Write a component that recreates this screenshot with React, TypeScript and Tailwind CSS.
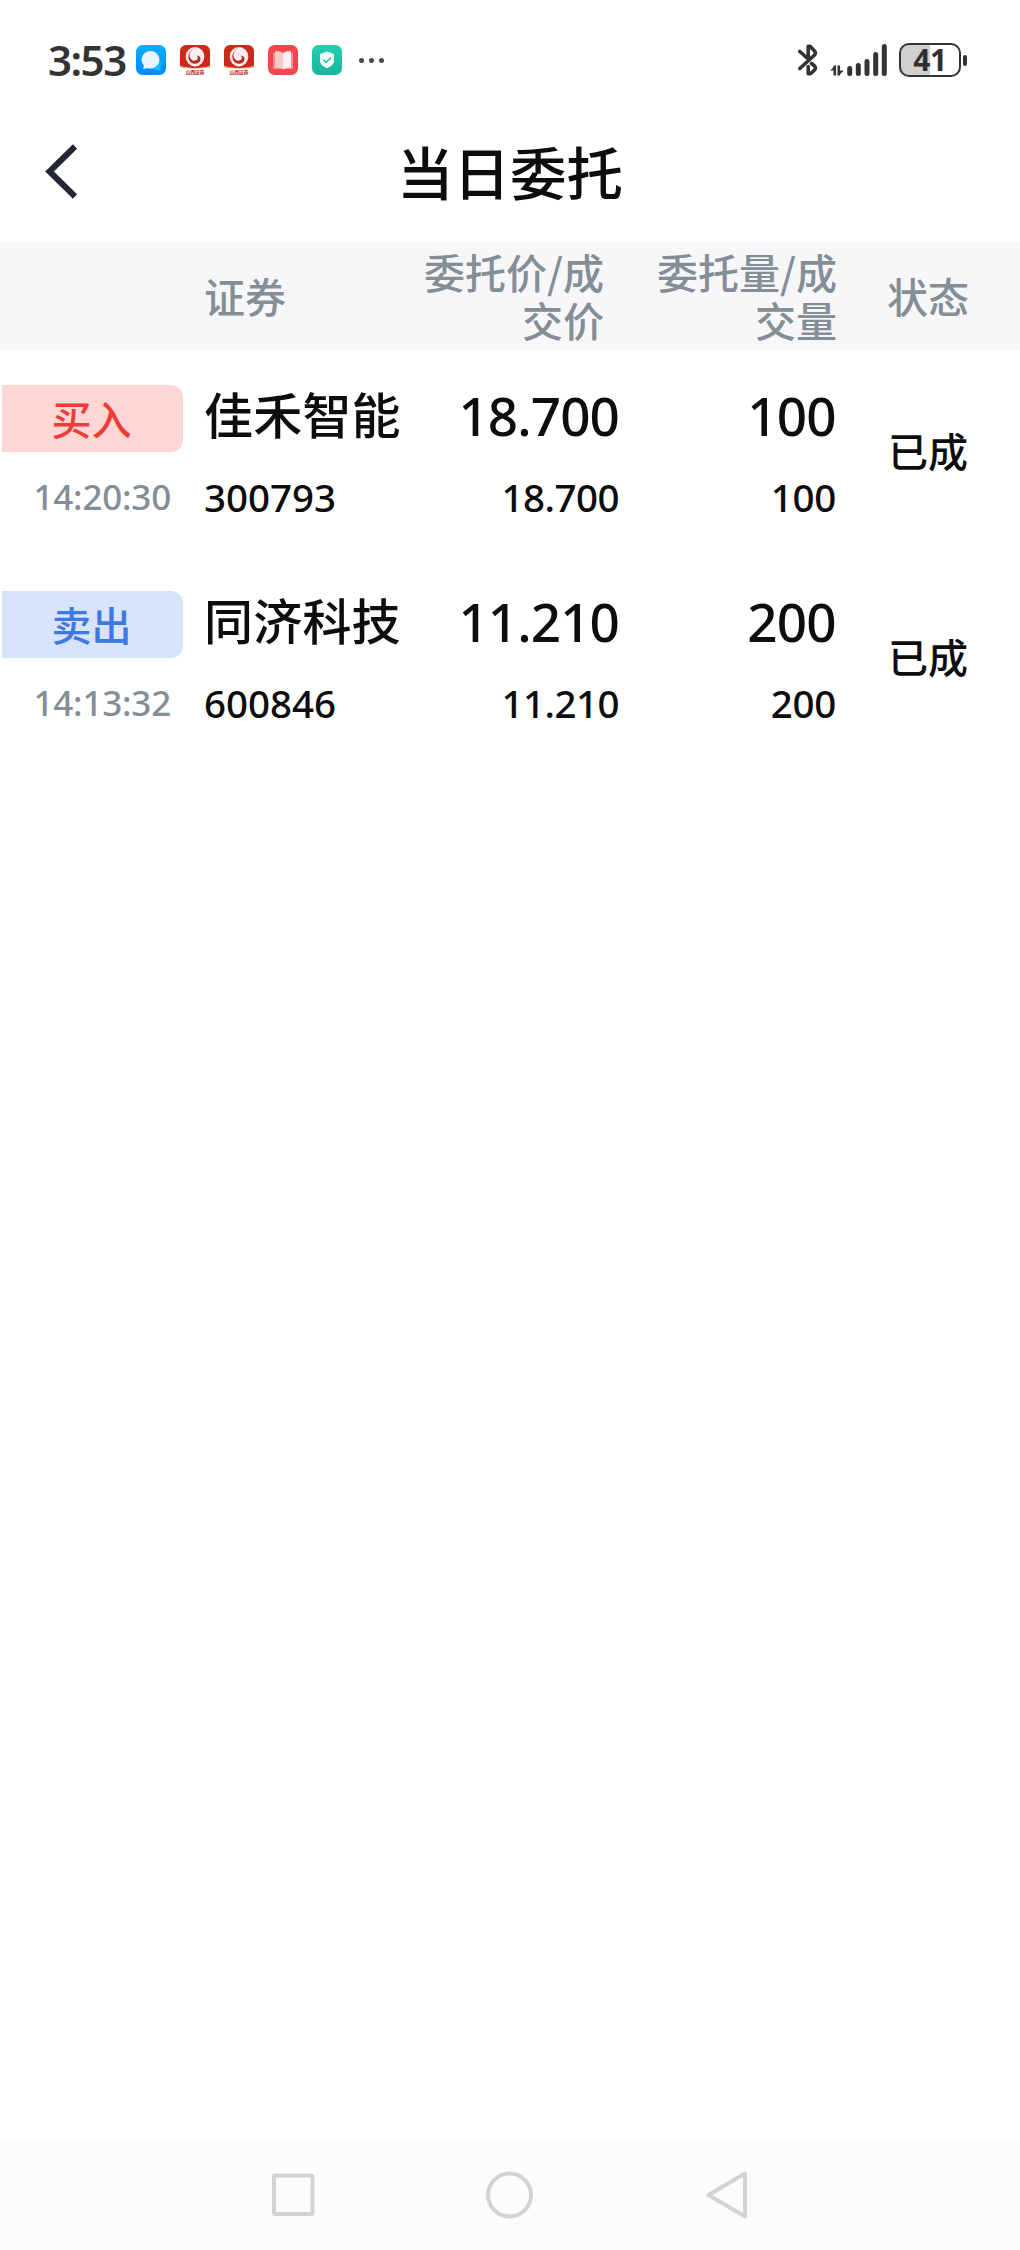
import { clsx } from "clsx";

interface Order {
  side: "buy" | "sell";
  time: string;
  name: string;
  code: string;
  orderPrice: string;
  dealPrice: string;
  orderQty: string;
  dealQty: string;
  status: string;
}

const orders: Order[] = [
  {
    side: "buy",
    time: "14:20:30",
    name: "佳禾智能",
    code: "300793",
    orderPrice: "18.700",
    dealPrice: "18.700",
    orderQty: "100",
    dealQty: "100",
    status: "已成",
  },
  {
    side: "sell",
    time: "14:13:32",
    name: "同济科技",
    code: "600846",
    orderPrice: "11.210",
    dealPrice: "11.210",
    orderQty: "200",
    dealQty: "200",
    status: "已成",
  },
];

function ChatIcon() {
  return (
    <svg width="30" height="30" viewBox="0 0 30 30">
      <defs>
        <linearGradient id="chat" x1="0" y1="0" x2="0" y2="1">
          <stop offset="0" stopColor="#06b2fd" />
          <stop offset="1" stopColor="#0289fb" />
        </linearGradient>
      </defs>
      <rect width="30" height="30" rx="6.5" fill="url(#chat)" />
      <path d="M23 15c2.500 1.500 3 5 1 7.500l.8 2.500h-5a6 6 0 0 1-4-2z" fill="#12bffc" />
      <path
        d="M14.300 6a9.300 8.700 0 1 1-3.300 16.900c-1.200.8-2.600 1.100-3.800 1l.6-3.600A9.300 8.700 0 0 1 14.300 6z"
        fill="#e8f5ff"
      />
    </svg>
  );
}

function BrokerIcon() {
  return (
    <svg width="30" height="30" viewBox="0 0 30 30">
      <path d="M6 0h18a6 6 0 0 1 6 6v15c-4 1.300-9 2.200-15 2.200S4 22.300 0 21V6a6 6 0 0 1 6-6z" fill="#cb2a1a" />
      <path d="M0 20.500c4 1.800 9 2.500 15 2.500s11-.7 15-2.500v1.700c-5 1-9 1.300-15 1.300S5 23.200 0 22.200z" fill="#f3a76c" />
      <ellipse cx="15" cy="11.700" rx="9.300" ry="9.700" fill="#fbeeee" />
      <path
        d="M15.500 2c-3.500 2.500-6.300 4.800-6 8.500.3 3.500 2.700 5.600 5.500 5.200 3-.5 3.800-3.800 1.600-4.900 2.700-.4 4.500 1.700 3.700 4.400-1.200 3.700-6.500 4.700-9.800 1.700C6.300 13 8.300 5.500 15.500 2z"
        fill="#b92b25"
      />
      <text
        x="15"
        y="29.300"
        textAnchor="middle"
        textLength="19"
        fontSize="5"
        fontWeight="700"
        fontFamily="Noto Sans CJK SC, sans-serif"
        fill="#b52a2a"
      >
        山西证券
      </text>
    </svg>
  );
}

function ReaderIcon() {
  return (
    <svg width="30" height="30" viewBox="0 0 30 30">
      <rect width="30" height="30" rx="6.500" fill="#f4464f" />
      <path d="M5 8h20v16H5z" fill="#f98d92" />
      <path d="M7 6.500c3-.5 6 0 8 1.800v16.200c-2-1.500-5-2-8-1.500z" fill="#fcc9cb" />
      <path d="M23 6.500c-3-.5-6 0-8 1.800v16.200c2-1.500 5-2 8-1.500z" fill="#fff1f0" />
    </svg>
  );
}

function ShieldIcon() {
  return (
    <svg width="30" height="30" viewBox="0 0 30 30">
      <defs>
        <linearGradient id="shield" x1="0" y1="0" x2="0" y2="1">
          <stop offset="0" stopColor="#27cdb1" />
          <stop offset="1" stopColor="#16b89e" />
        </linearGradient>
      </defs>
      <rect width="30" height="30" rx="6.500" fill="url(#shield)" />
      <path d="M15 6.500l7 2.600v6.400c0 3.600-3 6-7 7.800-4-1.800-7-4.200-7-7.800V9.100z" fill="#f2fffc" />
      <path d="M11.300 14.800l2.900 2.700 4.800-5" fill="none" stroke="#1fbfa5" strokeWidth="1.500" />
    </svg>
  );
}

function BluetoothIcon() {
  return (
    <svg className="mr-3" width="20" height="32" viewBox="0 0 20 32">
      <path
        d="M1.800 7.500L8.500 13.500M1.800 24.500L16.500 11a3 3 0 0 0 0-4L12 2.200h-1.800V14M13.500 19.500l3 2.500a3 3 0 0 1 0 4L12.500 29.800h-2.300V22.500"
        fill="none"
        stroke="#333"
        strokeWidth="3.600"
        strokeLinejoin="round"
        strokeLinecap="round"
      />
    </svg>
  );
}

function SignalIcon() {
  return (
    <svg className="mr-3" width="57" height="32" viewBox="0 0 57 32" fill="none" stroke="#333">
      <path d="M4.800 21.500v10M8.800 21.500v10" strokeWidth="2.600" />
      <path d="M0 26.500l5.500-5v5zM14 26.500l-5.500 5v-5z" fill="#333" stroke="none" />
      <path d="M19.700 24.500v5M28.300 21.500v8M37 17.500v12M45.700 10.500v19M54.300 2.500v27" strokeWidth="5" strokeLinecap="round" />
    </svg>
  );
}

function Battery() {
  return (
    <div className="flex items-center gap-0.5">
      <div className="flex h-[34px] w-[62px] items-center justify-center rounded-[10px] border-2 border-[#333] bg-linear-to-r from-[#d0d0d0] from-50% to-white to-50% text-[30px] leading-[30px] font-bold tracking-[-0.500px] text-[#2f2f2f]">
        41
      </div>
      <i className="h-[11px] w-1 rounded-sm bg-[#333]" />
    </div>
  );
}

function StatusBar() {
  return (
    <div className="flex h-[120px] items-center pr-[53px] pl-12">
      <span className="mb-0.5 w-[88px] text-[42px] font-semibold tracking-[-1.500px] text-[#333]">3:53</span>
      <div className="flex gap-3.5">
        <ChatIcon />
        <BrokerIcon />
        <BrokerIcon />
        <ReaderIcon />
        <ShieldIcon />
      </div>
      <div className="ml-[17px] flex gap-[5px]">
        <i className="size-[5px] rounded-full bg-[#4a4a4a]" />
        <i className="size-[5px] rounded-full bg-[#4a4a4a]" />
        <i className="size-[5px] rounded-full bg-[#4a4a4a]" />
      </div>
      <div className="ml-auto flex items-center">
        <BluetoothIcon />
        <SignalIcon />
        <Battery />
      </div>
    </div>
  );
}

function TitleBar() {
  return (
    <div className="grid h-[122px] grid-cols-[200px_1fr_200px] pt-6">
      <svg className="ml-[45px]" width="33" height="56" viewBox="0 0 33 56">
        <path d="M30 2.500L4.500 27.500 30 52.500" fill="none" stroke="#232734" strokeWidth="6" />
      </svg>
      <h1 className="text-center text-[56.500px] leading-[59px] font-medium">当日委托</h1>
    </div>
  );
}

function TableHead() {
  return (
    <div className="grid h-[108px] grid-cols-[204px_210px_190px_233px_132px] items-center bg-[#f7f7fa] pb-0.5 font-['Noto_Sans_CJK_SC',sans-serif] text-[41px] leading-[48px] whitespace-nowrap text-[#848e96]">
      <span />
      <span>证券</span>
      <span className="text-right">
        委托价/成
        <br />
        交价
      </span>
      <span className="text-right">
        委托量/成
        <br />
        交量
      </span>
      <span className="text-right">状态</span>
    </div>
  );
}

function OrderRow({ order }: { order: Order }) {
  return (
    <div className="grid h-[206px] grid-cols-[204px_210px_205px_217px_132px] pt-[35px]">
      <div>
        <div
          className={clsx(
            "ml-0.5 flex h-[67px] w-[181px] items-center justify-center rounded-r-xl pt-0.5 pr-0.5 text-[40px]",
            order.side === "buy" ? "bg-[#ffd6d6] text-[#ec3d37]" : "bg-[#d8e3fc] text-[#3f78df]"
          )}
        >
          {order.side === "buy" ? "买入" : "卖出"}
        </div>
        <p className="mt-[21px] pr-[33px] text-right text-[35px] leading-[48px] tracking-[-0.200px] text-[#848e96]">
          {order.time}
        </p>
      </div>
      <div>
        <p className="text-[49px] leading-[60px] font-medium tracking-[0.200px]">{order.name}</p>
        <p className="mt-7 text-[38.500px] leading-[48px]">{order.code}</p>
      </div>
      <div className="text-right">
        <p className="text-[53px] leading-[62px] font-medium tracking-[-0.900px]">{order.orderPrice}</p>
        <p className="mt-[26px] text-[38.500px] leading-[48px] tracking-[-0.500px]">{order.dealPrice}</p>
      </div>
      <div className="text-right">
        <p className="text-[53px] leading-[62px] font-medium tracking-[-0.700px]">{order.orderQty}</p>
        <p className="mt-[26px] text-[38.500px] leading-[48px] tracking-[-0.300px]">{order.dealQty}</p>
      </div>
      <p className="mt-[43px] text-right text-[40px] leading-[48px]">{order.status}</p>
    </div>
  );
}

function NavBar() {
  return (
    <div className="flex h-[110px] items-center bg-[#fcfcfc] pl-[272px]">
      <svg width="476" height="48" viewBox="0 0 476 48" fill="none" stroke="#d3d3d3" strokeWidth="4" strokeLinejoin="round">
        <rect x="2" y="4.500" width="38.500" height="38.500" rx="1.500" />
        <circle cx="237.500" cy="24" r="21.500" />
        <path d="M473 2.500v43L436.500 24z" />
      </svg>
    </div>
  );
}

export default function App() {
  return (
    <div className="flex h-[2250px] w-[1020px] flex-col bg-white font-['Noto_Sans','Noto_Sans_CJK_SC',sans-serif] font-medium text-[#0d0d0d]">
      <StatusBar />
      <TitleBar />
      <TableHead />
      <div className="flex-1">
        {orders.map((order) => (
          <OrderRow key={order.code} order={order} />
        ))}
      </div>
      <NavBar />
    </div>
  );
}
